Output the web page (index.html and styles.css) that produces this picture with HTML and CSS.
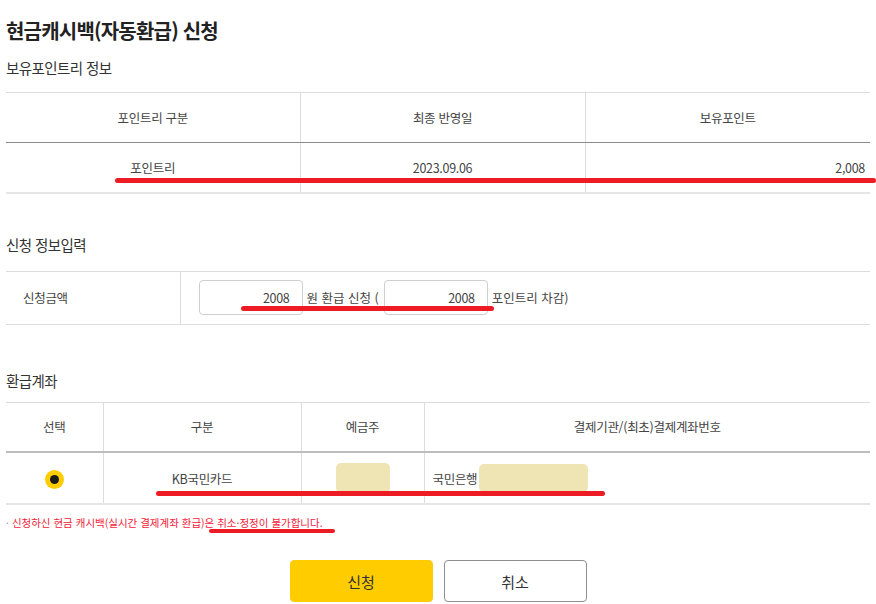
FILE: index.html
```html
<!DOCTYPE html>
<html lang="ko">
<head>
<meta charset="utf-8">
<link rel="stylesheet" href="styles.css">
</head>
<body>
<div class="page">
  <h1 class="title">현금캐시백(자동환급) 신청</h1>
  <h2 class="sec">보유포인트리 정보</h2>
  <table class="tbl t1">
    <colgroup><col class="c1"><col class="c2"><col class="c3"></colgroup>
    <thead>
      <tr><th>포인트리 구분</th><th>최종 반영일</th><th>보유포인트</th></tr>
    </thead>
    <tbody>
      <tr><td>포인트리</td><td>2023.09.06</td><td class="num">2,008</td></tr>
    </tbody>
  </table>

  <h2 class="sec sec2">신청 정보입력</h2>
  <table class="tbl t2">
    <colgroup><col class="d1"><col class="d2"></colgroup>
    <tbody>
      <tr>
        <td class="label">신청금액</td>
        <td class="inputs">
          <div class="field-row">
            <span class="box">2008</span>
            <span class="txt">원 환급 신청 (</span>
            <span class="box">2008</span>
            <span class="txt">포인트리 차감)</span>
          </div>
        </td>
      </tr>
    </tbody>
  </table>

  <h2 class="sec sec3">환급계좌</h2>
  <table class="tbl t3">
    <colgroup><col class="e1"><col class="e2"><col class="e3"><col class="e4"></colgroup>
    <thead>
      <tr><th>선택</th><th>구분</th><th>예금주</th><th>결제기관/(최초)결제계좌번호</th></tr>
    </thead>
    <tbody>
      <tr>
        <td><span class="radio"></span></td>
        <td>KB국민카드</td>
        <td><span class="blur blur1"></span></td>
        <td class="bank"><span class="bank-name">국민은행</span><span class="blur blur2"></span></td>
      </tr>
    </tbody>
  </table>

  <p class="note"><span class="dot">·</span> 신청하신 현금 캐시백(실시간 결제계좌 환급)은 취소·정정이 불가합니다.</p>

  <div class="btns">
    <button class="btn primary" type="button">신청</button>
    <button class="btn secondary" type="button">취소</button>
  </div>

  <span class="mark m1"></span>
  <span class="mark m2"></span>
  <span class="mark m3"></span>
  <span class="mark m4"></span>
</div>
</body>
</html>
```

FILE: styles.css
```css
* { box-sizing: border-box; }
html, body { margin: 0; padding: 0; background: #fff; }
body {
  font-family: "Noto Sans CJK KR", "Noto Sans", sans-serif;
  color: #333;
}
.page {
  position: relative;
  width: 876px;
  height: 604px;
  padding: 0 6px;
  overflow: hidden;
}
.title {
  margin: 0;
  padding-top: 14px;
  height: 48px;
  line-height: 34px;
  font-size: 20px;
  font-weight: 700;
  color: #222;
  letter-spacing: -0.8px;
}
.sec {
  margin: 8px 0 0;
  height: 24px;
  line-height: 24px;
  font-size: 14.5px;
  font-weight: 400;
  color: #333;
  letter-spacing: -0.6px;
}
.sec2 { margin-top: 39px; }
.sec3 { margin-top: 44px; }

.tbl {
  width: 864px;
  border-collapse: collapse;
  table-layout: fixed;
  font-size: 12.5px;
  color: #444;
  letter-spacing: -0.3px;
}
.t1 { margin-top: 12px; }
.t2 { margin-top: 14px; }
.t3 { margin-top: 9px; }
.tbl th, .tbl td {
  padding: 0;
  text-align: center;
  font-weight: 400;
  border-left: 1px solid #dcdcdc;
  border-right: 1px solid #dcdcdc;
}
.tbl th:first-child, .tbl td:first-child { border-left: none; }
.tbl th:last-child, .tbl td:last-child { border-right: none; }
.tbl thead tr { border-top: 1px solid #dcdcdc; }
.tbl tbody tr:last-child { border-bottom: 2px solid #e6e6e6; }

.t1 .c1 { width: 294px; }
.t1 .c2 { width: 285px; }
.t1 .c3 { width: 285px; }
.t1 th { height: 50px; border-bottom: 1px solid #8a8a8a; }
.t1 td { height: 50px; }
.t1 td.num { text-align: right; padding-right: 5px; }

.t2 tbody tr { border-top: 1px solid #dcdcdc; }
.t2 tbody tr:last-child { border-bottom: 1px solid #dcdcdc; }
.t2 .d1 { width: 174px; }
.t2 .d2 { width: 690px; }
.t2 td { height: 53px; }
.t2 td.label { text-align: left; padding-left: 17px; }
.t2 td.inputs { text-align: left; padding-left: 18px; }
.field-row { display: flex; align-items: center; gap: 4px; }
.field-row .txt { letter-spacing: 0; }
.field-row .txt:nth-child(2) { margin-right: 1px; }
.box {
  display: inline-block;
  width: 104px;
  height: 35px;
  line-height: 33px;
  border: 1px solid #cfcfcf;
  border-radius: 4px;
  text-align: right;
  padding-right: 12px;
  color: #444;
}

.t3 .e1 { width: 97px; }
.t3 .e2 { width: 198px; }
.t3 .e3 { width: 123px; }
.t3 .e4 { width: 446px; }
.t3 th { height: 50px; border-bottom: 2px solid #bdbdbd; }
.t3 td { height: 52px; vertical-align: middle; }
.t3 td.bank { text-align: left; padding-left: 8px; }
.bank-name { display: inline-block; vertical-align: middle; }
.radio {
  display: inline-block;
  width: 19px;
  height: 19px;
  border-radius: 50%;
  background: #ffcc00;
  position: relative;
  vertical-align: middle;
}
.radio::after {
  content: "";
  position: absolute;
  left: 5px;
  top: 5px;
  width: 9px;
  height: 9px;
  border-radius: 50%;
  background: #1a1a1a;
}
.blur {
  display: inline-block;
  vertical-align: middle;
  background: #efe4b3;
  border-radius: 5px;
}
.blur1 { width: 54px; height: 30px; }
.blur2 { width: 109px; height: 28px; margin-left: 2px; }

.note {
  margin: 10px 0 0;
  height: 16px;
  line-height: 16px;
  font-size: 10.5px;
  color: #f2233a;
  letter-spacing: 0;
}
.note .dot { color: #999; }

.btns {
  margin-top: 29px;
  display: flex;
  justify-content: center;
  gap: 11px;
}
.btn {
  width: 143px;
  height: 42px;
  border-radius: 4px;
  font-family: inherit;
  font-size: 15px;
  color: #333;
  cursor: pointer;
}
.btn.primary { background: #ffcc00; border: 1px solid #ffcc00; }
.btn.secondary { background: #fff; border: 1px solid #8e8e8e; }

.mark {
  position: absolute;
  display: block;
  background: #ed1c24;
  border-radius: 3px;
}
.m1 { left: 115px; top: 178px; width: 761px; height: 5px; }
.m2 { left: 241px; top: 306px; width: 253px; height: 5px; }
.m3 { left: 156px; top: 491px; width: 449px; height: 5px; }
.m4 { left: 209px; top: 529px; width: 126px; height: 4px; }
```
